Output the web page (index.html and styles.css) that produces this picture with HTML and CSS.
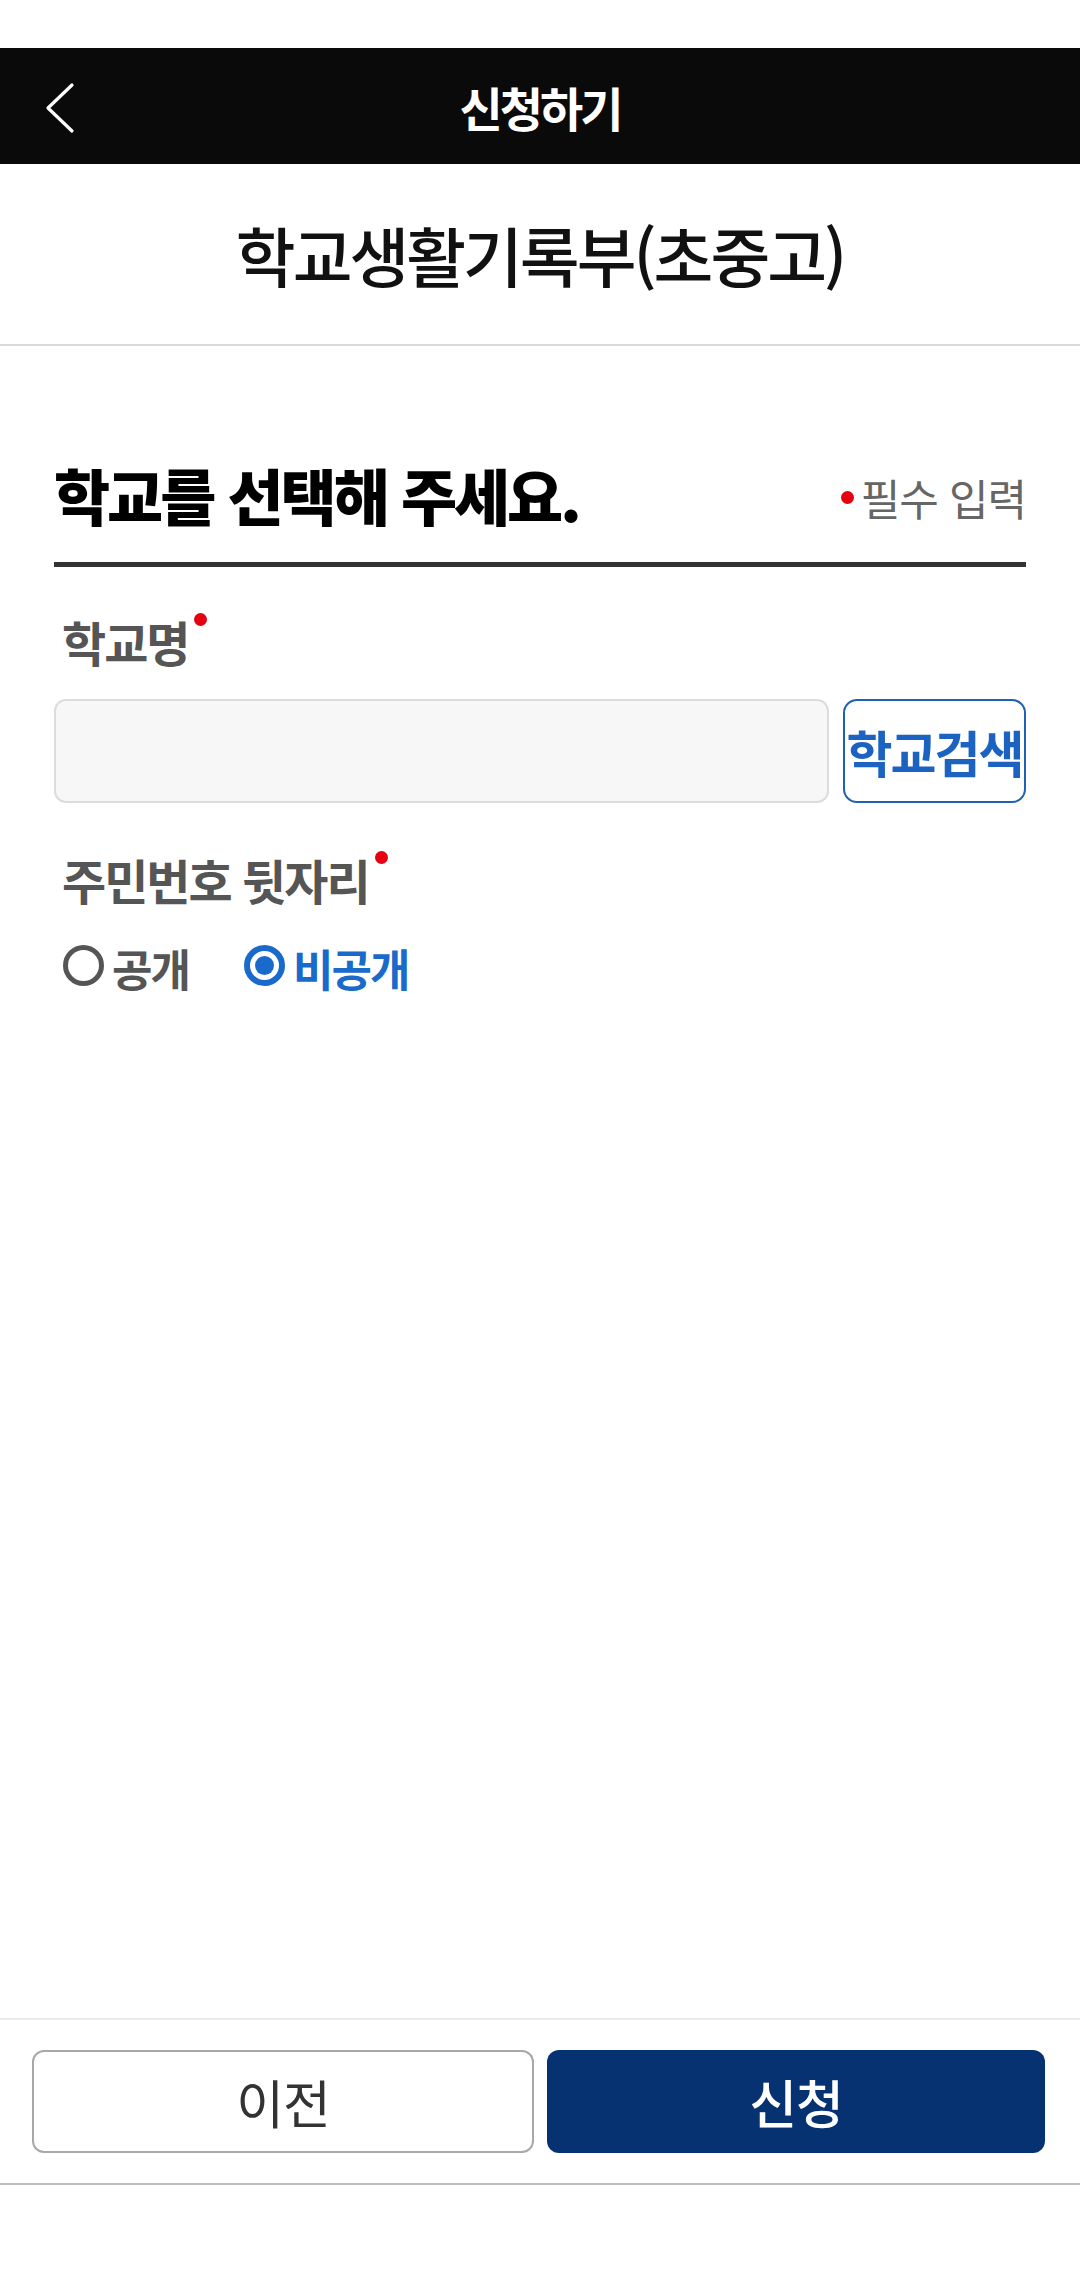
FILE: index.html
```html
<!DOCTYPE html>
<html lang="ko">

<head>
  <meta charset="UTF-8" />
  <meta name="viewport" content="width=device-width, initial-scale=1" />
  <title>신청하기</title>
  <link rel="stylesheet" href="styles.css">
</head>

<body>
  <div class="screen">
    <div class="status-bar"></div>

    <header class="topbar">
      <button class="back-btn" aria-label="뒤로">
        <svg width="40" height="60" viewBox="0 0 40 60">
          <polyline points="27,8 3,31 27,54" fill="none" stroke="#fff" stroke-width="3.2" stroke-linecap="round" stroke-linejoin="round" />
        </svg>
      </button>
      <h1>신청하기</h1>
      <span></span>
    </header>

    <div class="page-title">학교생활기록부(초중고)</div>

    <main class="content">
      <div class="section-head">
        <h2>학교를 선택해 주세요.</h2>
        <span class="required-note"><i class="dot"></i>필수 입력</span>
      </div>

      <!-- 학교명 -->
      <label class="field-label">학교명<i class="dot sup"></i></label>
      <div class="search-row">
        <input type="text" class="text-input" />
        <button class="search-btn">학교검색</button>
      </div>

      <!-- 주민번호 공개 여부 -->
      <label class="field-label second">주민번호 뒷자리<i class="dot sup"></i></label>
      <div class="radio-row">
        <label class="radio">
          <span class="radio-mark"></span>공개
        </label>
        <label class="radio checked">
          <span class="radio-mark"></span>비공개
        </label>
      </div>
    </main>

    <footer class="bottom-bar">
      <button class="btn btn-prev">이전</button>
      <button class="btn btn-submit">신청</button>
    </footer>
  </div>
</body>

</html>
```

FILE: styles.css
```css
body {
  margin: 0;
  padding: 0;
  background-color: #fff;
  font-family: "Noto Sans CJK KR", "Noto Sans", sans-serif;
  color: #111;
}

.screen {
  width: 1080px;
  height: 2280px;
  display: flex;
  flex-direction: column;
}

.status-bar {
  height: 48px;
  background-color: #fff;
}

.topbar {
  height: 116px;
  background-color: #0a0a0a;
  display: grid;
  grid-template-columns: 1fr auto 1fr;
  align-items: center;
}

.back-btn {
  justify-self: start;
  margin-left: 45px;
  margin-top: 2px;
  padding: 0;
  border: none;
  background: none;
  display: flex;
}

.topbar h1 {
  margin: 0;
  color: #fff;
  font-size: 47px;
  font-weight: 700;
  letter-spacing: -3px;
}

.page-title {
  height: 180px;
  display: flex;
  align-items: center;
  justify-content: center;
  font-size: 65px;
  font-weight: 500;
  letter-spacing: -3px;
  color: #111;
  border-bottom: 2px solid #d9d9d9;
}

.content {
  flex: 1;
  padding: 0 54px;
}

.section-head {
  display: flex;
  align-items: center;
  justify-content: space-between;
  padding: 114px 0 32px;
  border-bottom: 5px solid #333;
}

.section-head h2 {
  margin: 0;
  font-size: 61px;
  line-height: 1.15;
  font-weight: 900;
  letter-spacing: -3px;
  color: #000;
}

.required-note {
  display: flex;
  align-items: center;
  font-size: 43px;
  letter-spacing: -1px;
  color: #666;
  margin-top: 4px;
}

.dot {
  display: inline-block;
  width: 13px;
  height: 13px;
  border-radius: 50%;
  background-color: #e50012;
  margin-right: 7px;
}

.dot.sup {
  vertical-align: top;
  margin: 0 0 0 6px;
}

.field-label {
  display: block;
  margin-top: 46px;
  padding-left: 8px;
  font-size: 48px;
  line-height: 1.2;
  font-weight: 700;
  letter-spacing: -2px;
  color: #555;
}

.field-label.second {
  margin-top: 48px;
}

.search-row {
  display: flex;
  gap: 14px;
  margin-top: 28px;
}

.text-input {
  flex: 1;
  height: 104px;
  box-sizing: border-box;
  border: 2px solid #dcdcdc;
  border-radius: 12px;
  background-color: #f7f7f7;
  font-size: 40px;
}

.search-btn {
  width: 183px;
  height: 104px;
  padding: 0;
  border: 2px solid #2061b3;
  border-radius: 14px;
  background-color: #fff;
  color: #1c63c1;
  font-family: inherit;
  font-size: 50px;
  font-weight: 700;
  letter-spacing: -2px;
  white-space: nowrap;
}

.radio-row {
  display: flex;
  gap: 55px;
  margin-top: 34px;
  padding-left: 9px;
}

.radio {
  display: flex;
  align-items: center;
  gap: 8px;
  font-size: 44px;
  line-height: 1.2;
  font-weight: 700;
  letter-spacing: -2px;
  color: #555;
}

.radio-mark {
  width: 41px;
  height: 41px;
  box-sizing: border-box;
  border: 5px solid #555;
  border-radius: 50%;
  margin-top: -6px;
  display: flex;
  align-items: center;
  justify-content: center;
}

.radio.checked {
  color: #1a6acb;
}

.radio.checked .radio-mark {
  border: 6px solid #1a6acb;
}

.radio.checked .radio-mark::after {
  content: "";
  width: 19px;
  height: 19px;
  border-radius: 50%;
  background-color: #1a6acb;
}

.bottom-bar {
  display: flex;
  gap: 13px;
  padding: 30px 35px 30px 32px;
  border-top: 2px solid #ececec;
  border-bottom: 2px solid #bdbdbd;
  margin-bottom: 95px;
}

.btn {
  flex: 1;
  height: 103px;
  border-radius: 12px;
  font-family: inherit;
  font-size: 52px;
  letter-spacing: -1px;
}

.btn-prev {
  border: 2px solid #a8a8a8;
  background-color: #fff;
  color: #333;
}

.btn-submit {
  border: none;
  background-color: #063272;
  color: #fff;
  font-weight: 500;
}
```
